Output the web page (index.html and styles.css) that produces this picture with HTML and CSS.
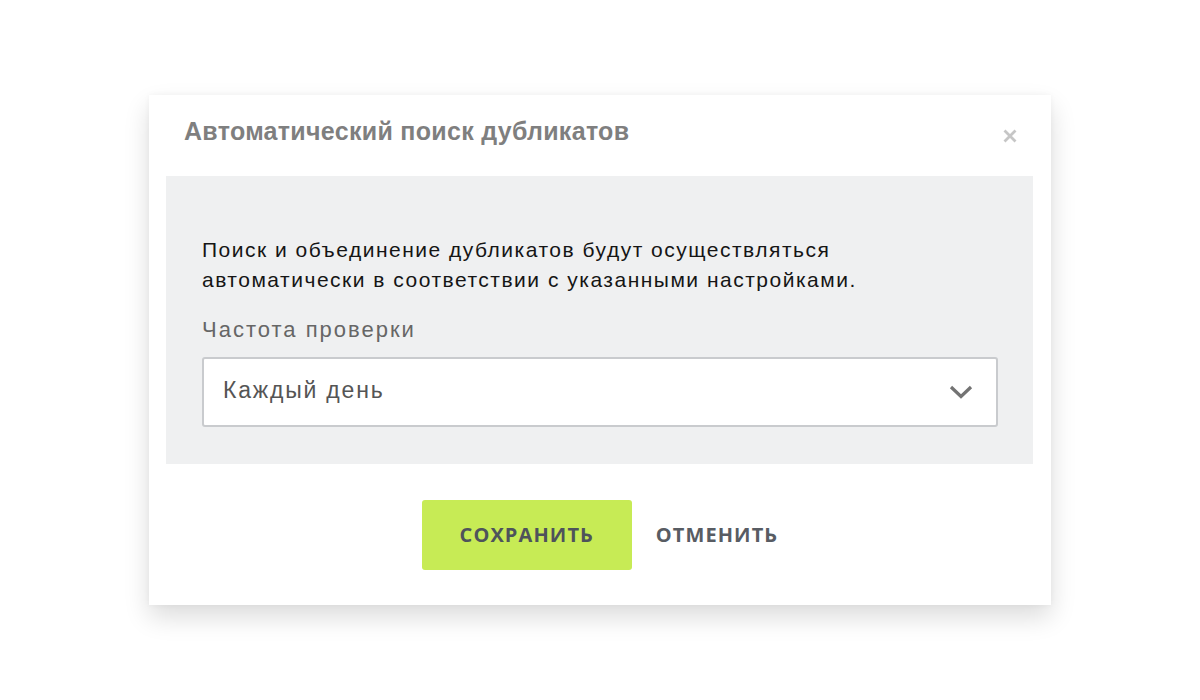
FILE: index.html
```html
<!DOCTYPE html>
<html lang="ru">
<head>
<meta charset="utf-8">
<link rel="stylesheet" href="styles.css">
</head>
<body>
<div class="page">
  <div class="dialog">
    <div class="dialog-header">
      <h1 class="dialog-title">Автоматический поиск дубликатов</h1>
      <span class="dialog-close">
        <svg width="14" height="14" viewBox="0 0 14 14"><path d="M1.5 1.5 L12.5 12.5 M12.5 1.5 L1.5 12.5" stroke="#c6c6c6" stroke-width="2.8" stroke-linecap="butt"/></svg>
      </span>
    </div>
    <div class="dialog-body">
      <p class="desc">Поиск и объединение дубликатов будут осуществляться<br>автоматически в соответствии с указанными настройками.</p>
      <div class="field-label">Частота проверки</div>
      <div class="select">
        <span class="select-value">Каждый день</span>
        <svg class="chevron" width="24" height="14" viewBox="0 0 24 14"><path d="M2 2 L12 11.5 L22 2" fill="none" stroke="#737373" stroke-width="3.2"/></svg>
      </div>
    </div>
    <div class="dialog-footer">
      <button class="btn-save">СОХРАНИТЬ</button>
      <button class="btn-cancel">ОТМЕНИТЬ</button>
    </div>
  </div>
</div>
</body>
</html>
```
FILE: styles.css
```css
* { box-sizing: border-box; }
html, body { margin: 0; padding: 0; background: #fff; }
.page {
  width: 1200px;
  height: 700px;
  padding-top: 95px;
  padding-left: 149px;
}
.dialog {
  width: 902px;
  height: 510px;
  background: #fff;
  box-shadow: 0 12px 24px rgba(0,0,0,0.14), 0 0 6px rgba(0,0,0,0.04);
  display: flex;
  flex-direction: column;
}
.dialog-header {
  height: 81px;
  display: flex;
  align-items: center;
  justify-content: space-between;
  padding: 0 34px 8px 35px;
}
.dialog-title {
  margin: 0;
  font-family: "Liberation Sans", Arial, sans-serif;
  font-weight: bold;
  font-size: 25px;
  color: #7f7f7f;
  letter-spacing: 0.3px;
}
.dialog-close { display: flex; padding-top: 8px; }
.dialog-body {
  margin: 0 18px 0 17px;
  height: 288px;
  background: #eff0f1;
  padding: 59px 35px 0 36px;
}
.desc {
  margin: 0;
  font-family: "Liberation Sans", Arial, sans-serif;
  font-size: 21px;
  line-height: 30px;
  color: #151515;
  letter-spacing: 1.5px;
}
.field-label {
  margin-top: 23px;
  font-family: "Liberation Sans", Arial, sans-serif;
  font-size: 22px;
  line-height: 24px;
  color: #666;
  letter-spacing: 2px;
}
.select {
  margin-top: 15px;
  height: 70px;
  background: #fff;
  border: 2px solid #c9cbce;
  border-radius: 3px;
  display: flex;
  align-items: center;
  justify-content: space-between;
  padding: 0 23px 0 19px;
}
.select-value {
  font-family: "Liberation Sans", Arial, sans-serif;
  font-size: 23px;
  color: #555;
  letter-spacing: 1.8px;
  padding-bottom: 4px;
}
.dialog-footer {
  flex: 1;
  display: flex;
  align-items: center;
  justify-content: center;
  gap: 24px;
}
.btn-save, .btn-cancel {
  font-family: "Open Sans", sans-serif;
  font-weight: bold;
  font-size: 20px;
  color: #4e535b;
  border: none;
  cursor: pointer;
  letter-spacing: 1.1px;
}
.btn-save {
  width: 210px;
  height: 70px;
  background: #c7eb55;
  border-radius: 3px;
}
.btn-cancel {
  background: none;
  padding: 0;
  color: #585c63;
}
```
